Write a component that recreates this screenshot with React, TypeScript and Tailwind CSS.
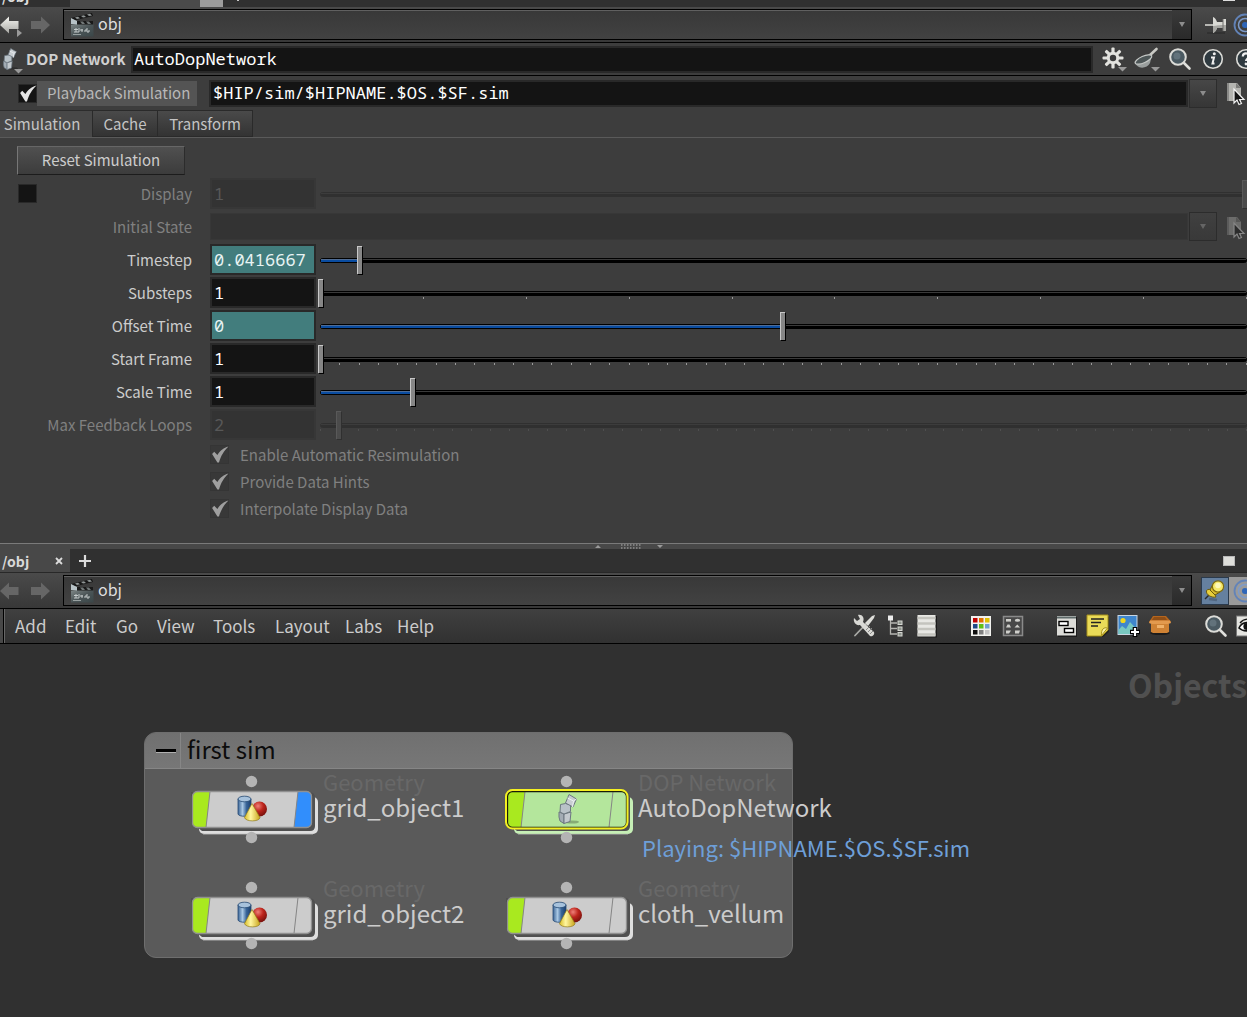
import { useState } from "react";
import type { ReactNode } from "react";

function Clapper() {
  return (
    <svg width="24" height="26" viewBox="0 0 24 26" className="shrink-0" aria-hidden="true">
      <defs>
        <linearGradient id="clap" x1="0" y1="0" x2="1" y2="1">
          <stop offset="0" stopColor="#7d8686" />
          <stop offset="0.5" stopColor="#4a5456" />
          <stop offset="1" stopColor="#3a4648" />
        </linearGradient>
      </defs>
      <path d="M1 6 L22 1 L23 4 L2 9z" fill="#161616" />
      <path d="M5 5.500 l3 -.8 l2 1.600 l-3 .8z M11 4 l3 -.7 l2 1.600 l-3 .7z M17 2.500 l3 -.7 l2 1.600 l-3 .7z" fill="#8f9494" />
      <path d="M1 9 H23 V13 H1z" fill="#191919" />
      <path d="M10 9.500h3l2 2.500h-3z M16 9.500h3l2 2.500h-3z" fill="#727878" />
      <path d="M1 6 L7 9 L7 13 L1 12z" fill="#b7c2c6" />
      <rect x="1" y="12.500" width="22.500" height="12" fill="url(#clap)" />
      <path d="M4 17.500h4M6 16v4M9 16v4M10 18h3M12 20v-3M14 19h2v-2M17 16v4h2v-2M4 20h5" stroke="#c4caca" strokeWidth="1" fill="none" />
      <path d="M3 22.500h8" stroke="#98a0a0" />
    </svg>
  );
}

function NavArrow({ right = false, dim = false }: { right?: boolean; dim?: boolean }) {
  return (
    <svg width="22" height="24" viewBox="0 0 22 24" className="shrink-0" aria-hidden="true">
      <defs>
        <linearGradient id="arrowLit" x1="0" y1="0" x2="0" y2="1">
          <stop offset="0" stopColor="#f4f4f0" />
          <stop offset="1" stopColor="#a8a8a4" />
        </linearGradient>
      </defs>
      {right ? (
        <path d="M20 12 L11 3.500 V8 H1 V16 H11 V20.500z" fill="#666666" />
      ) : (
        <path d="M0 12 L9 3.500 V8 H18.500 V16 H9 V20.500z" fill={dim ? "#666666" : "url(#arrowLit)"} />
      )}
      {!dim && !right && <path d="M17 16 L22 20 L17 24z" fill="#9a9a9a" />}
    </svg>
  );
}

function Cubes({ className = "" }: { className?: string }) {
  return (
    <svg width="22" height="32" viewBox="0 0 22 32" className={className} aria-hidden="true">
      <ellipse cx="15" cy="29" rx="7" ry="1.600" fill="#000" opacity="0.250" />
      <g stroke="#6c7780" strokeWidth="1" strokeLinejoin="round">
        <path d="M2 19 l5 2 v9.500 l-4 -2.500 l-1 -4z" fill="#a3acb4" />
        <path d="M7 21 l7 -2 l-1 9.500 l-6 2z" fill="#c3c9ce" />
        <path d="M3.500 11.500 l5 -1 l5 1.500 v6.500 l-6.500 2.500 l-4 -2z" fill="#b9c2c8" />
        <path d="M12 1.500 l7.500 4.500 l-3.500 8 l-7.500 -4z" fill="#c9ced2" />
        <path d="M10.500 5 l6 3 l3 -2 M16.500 8 l-1 6" fill="none" stroke="#edf0f2" />
      </g>
    </svg>
  );
}

function Shapes() {
  return (
    <g>
      <defs>
        <linearGradient id="cyl" x1="0" y1="0" x2="1" y2="0">
          <stop offset="0" stopColor="#3c6595" />
          <stop offset="0.350" stopColor="#a9c8e4" />
          <stop offset="0.650" stopColor="#386498" />
          <stop offset="1" stopColor="#1c3f6d" />
        </linearGradient>
        <radialGradient id="ball" cx="0.400" cy="0.300" r="0.700">
          <stop offset="0" stopColor="#ee8078" />
          <stop offset="0.500" stopColor="#bd251c" />
          <stop offset="1" stopColor="#7a120d" />
        </radialGradient>
        <linearGradient id="cone" x1="0" y1="0" x2="1" y2="0">
          <stop offset="0" stopColor="#d8bc26" />
          <stop offset="0.400" stopColor="#fff6a0" />
          <stop offset="1" stopColor="#c9a41a" />
        </linearGradient>
      </defs>
      <path d="M0.500 3 V18 C1 21 13 21 13.500 18 V3z" fill="url(#cyl)" stroke="#264a74" strokeWidth="0.800" />
      <ellipse cx="7" cy="3" rx="6.500" ry="2.800" fill="#a7c2dc" stroke="#264a74" strokeWidth="0.800" />
      <circle cx="22" cy="13" r="7.500" fill="url(#ball)" />
      <path d="M14.500 7.500 L7 21.500 C8 26 22 26 22.500 21.500z" fill="url(#cone)" stroke="#8f7a1c" strokeWidth="0.700" />
    </g>
  );
}

function Magnifier() {
  return (
    <svg width="24" height="24" viewBox="0 0 24 24" aria-hidden="true">
      <path d="M15 15 L21.500 21.500" stroke="#e0e0dc" strokeWidth="2.600" strokeLinecap="round" />
      <circle cx="10" cy="10" r="7.800" fill="#4b5a62" stroke="#dcdcd8" strokeWidth="2" />
      <circle cx="9" cy="9" r="3.500" fill="#71828c" opacity="0.600" />
    </svg>
  );
}

function Gear() {
  const teeth = [0, 45, 90, 135, 180, 225, 270, 315];
  return (
    <svg width="26" height="26" viewBox="0 0 26 26" aria-hidden="true">
      <g fill="#e2e2de">
        {teeth.map((a) => (
          <rect key={a} x="10.400" y="1.500" width="3.200" height="6.500" rx="1" transform={`rotate(${a} 12 12)`} />
        ))}
        <circle cx="12" cy="12" r="6.200" />
      </g>
      <circle cx="12" cy="12" r="3.200" fill="#3a3a3a" />
      <path d="M17 21h9l-4.500 4.500z" fill="#999" />
    </svg>
  );
}

function Pan() {
  return (
    <svg width="26" height="26" viewBox="0 0 26 26" aria-hidden="true">
      <path d="M15 10 L22.500 3" stroke="#c9c9c4" strokeWidth="2.600" strokeLinecap="round" />
      <path d="M1 15 C2 24 13 23 16 17 L18 9z" fill="#9a9f9e" />
      <ellipse cx="9.500" cy="13.500" rx="9" ry="3.200" transform="rotate(-24 9.500 13.500)" fill="#4d5657" stroke="#c5c8c6" strokeWidth="1.200" />
      <path d="M17 21h9l-4.500 4.500z" fill="#999" />
    </svg>
  );
}

function RoundBadge({ kind }: { kind: "info" | "help" }) {
  return (
    <svg width="22" height="22" viewBox="0 0 22 22" aria-hidden="true">
      <circle cx="11" cy="11" r="9.300" fill="#2f3a40" stroke="#dcdcd8" strokeWidth="1.600" />
      {kind === "info" ? (
        <g>
          <circle cx="12.300" cy="5.800" r="1.500" fill="#eee" />
          <path d="M9 9.500 H12 L10.500 15.500 H12.500" fill="none" stroke="#eee" strokeWidth="2" />
        </g>
      ) : (
        <g>
          <path d="M7.800 8.500 C8 4.500 14 4.500 14 8 C14 10.500 11 10.500 11 13" fill="none" stroke="#eee" strokeWidth="2.200" />
          <circle cx="11" cy="16" r="1.400" fill="#eee" />
        </g>
      )}
    </svg>
  );
}

function PushPin() {
  return (
    <svg width="24" height="22" viewBox="0 0 24 22" aria-hidden="true">
      <path d="M3 19h18" stroke="#2b2b2b" strokeWidth="2" opacity="0.600" />
      <path d="M1 11 H10" stroke="#d5d5d0" strokeWidth="1.600" />
      <path d="M9 3 C12 4 13 8 13 8 H19 V5 H22 V17 H19 V14 H13 C13 14 12 18 9 19z" fill="#d9d9d4" />
      <path d="M9 12 C12 12 13 11 19 11 V14 H13 C13 14 12 18 9 19z M19 11h3v6h-3z" fill="#a6a6a2" />
      <path d="M19 5V17" stroke="#6f6f6d" />
    </svg>
  );
}

function Rings() {
  return (
    <svg width="24" height="24" viewBox="0 0 24 24" className="shrink-0" aria-hidden="true">
      <circle cx="12" cy="12" r="10.500" fill="none" stroke="#6283b8" strokeWidth="1.800" />
      <circle cx="12" cy="12" r="6.500" fill="none" stroke="#7d9bca" strokeWidth="1.500" />
      <circle cx="12" cy="12" r="3" fill="#2f66b8" />
    </svg>
  );
}

function YellowPin() {
  return (
    <svg width="22" height="24" viewBox="0 0 22 24" aria-hidden="true">
      <path d="M5 20 L13 21" stroke="#4a5c74" strokeWidth="2.500" opacity="0.700" />
      <path d="M1 20 L6 15" stroke="#2a2a2a" strokeWidth="1.500" />
      <path d="M2.500 11.500 C6 8 10 13 12 18 C8 19 1.500 16 2.500 11.500z" fill="#e8cf3c" stroke="#6a5a10" strokeWidth="1" />
      <path d="M6 11 L9 5 L16 13 L11 16z" fill="#d9bd2e" stroke="#6a5a10" strokeWidth="1" />
      <circle cx="14" cy="7.500" r="5.600" fill="#f6e969" stroke="#806c12" strokeWidth="1.200" />
      <circle cx="14" cy="6.500" r="2.800" fill="#fdf8b8" />
    </svg>
  );
}

function FilePick() {
  return (
    <svg width="21" height="26" viewBox="0 0 21 26" className="shrink-0" aria-hidden="true">
      <path d="M2 3 H12 L16 8 V21 H2z" fill="#b4b4b0" />
      <path d="M2 3 H4 V21 H2z" fill="#8a8a88" />
      <path d="M11 3 L16 8 H11z" fill="#7c7c7a" />
      <path d="M9 9 V23 L12 20 L14 24.500 L16.500 23.500 L14.500 19.500 H19z" fill="#151515" stroke="#f2f2f2" strokeWidth="1.200" />
    </svg>
  );
}

function CaretDown() {
  return (
    <svg width="8" height="7" viewBox="0 0 8 7" aria-hidden="true">
      <path d="M1 1h6l-3 5z" fill="#8d8d8d" />
    </svg>
  );
}

const iconTools = (
  <svg width="24" height="24" viewBox="0 0 24 24" aria-hidden="true">
    <path d="M3 21.500 L14 10" stroke="#a9aaa6" strokeWidth="1.800" strokeLinecap="round" />
    <path d="M13 9 L20 2 L23 1 L22 4 L16 12z" fill="#dededa" />
    <path d="M2 4 L5 7 L8 5 L6 1 C10 0 13 4 11 8 L22 18 C23 21 20 23 18 22 L8 11 C4 12 1 8 2 4z" fill="#d9d9d5" />
    <path d="M14 16l4 -4 M16 18l4 -4 M18 20l3 -3" stroke="#8a8a88" />
  </svg>
);
const iconTree = (
  <svg width="18" height="24" viewBox="0 0 18 24" aria-hidden="true">
    <path d="M3.500 4 V20 H10 M3.500 9H10 M3.500 14.500H10" fill="none" stroke="#b5b5b1" strokeWidth="1.300" />
    <rect x="1" y="1.500" width="5" height="5" fill="#ececec" />
    <g fill="#8f948d" stroke="#d5d7d2" strokeWidth="1">
      <rect x="11" y="7" width="4" height="3.500" />
      <rect x="11" y="13" width="4" height="3.500" />
      <rect x="11" y="18.500" width="4" height="3.500" />
    </g>
  </svg>
);
const iconList = (
  <svg width="20" height="24" viewBox="0 0 20 24" aria-hidden="true">
    <rect x="1" y="2" width="19" height="21.500" fill="#1a1a1a" />
    <rect x="0.500" y="1" width="18" height="21.500" fill="#e8e8e4" />
    <path d="M0.500 4h18M0.500 9.500h18M0.500 15h18M0.500 20.500h18" stroke="#c4c4be" strokeWidth="2.400" />
  </svg>
);
const paletteColors = ["#c00000", "#e07000", "#e0c000", "#204a87", "#5fc015", "#729fcf", "#101010", "#808080", "#c4c4c4"];
const iconPalette = (
  <svg width="20" height="22" viewBox="0 0 20 22" aria-hidden="true">
    <rect x="0" y="1" width="20" height="20" fill="#f2f2ee" />
    {paletteColors.map((c, i) => (
      <rect key={c} x={2 + (i % 3) * 6} y={3 + Math.floor(i / 3) * 6} width="4.500" height="4.500" fill={c} />
    ))}
  </svg>
);
const iconShapesGrid = (
  <svg width="22" height="22" viewBox="0 0 22 22" aria-hidden="true">
    <rect x="1.500" y="1.500" width="19" height="19" fill="#484848" stroke="#8a8a8a" strokeWidth="1.500" />
    <g fill="#cfcfcb">
      <rect x="4" y="4" width="5" height="2.600" />
      <ellipse cx="15.500" cy="5.300" rx="2.700" ry="1.500" />
      <path d="M4 12.500h5l-1.500 -3h-2z M12.500 12.500h5.500l-2.700 -3z M4 15.500h5l-2 3h-3z M13 15.500h5l-1 3h-4z" />
    </g>
  </svg>
);
const iconWindows = (
  <svg width="22" height="22" viewBox="0 0 22 22" aria-hidden="true">
    <rect x="2" y="2" width="19" height="20" fill="#1c1c1c" />
    <rect x="1" y="1" width="19" height="19.500" fill="#dcdcd8" />
    <rect x="1" y="1.500" width="19" height="2" fill="#5e6a6a" />
    <rect x="3" y="6.500" width="9" height="4" fill="#fff" stroke="#000" strokeWidth="1.400" />
    <rect x="8.500" y="13.500" width="9" height="4" fill="#fff" stroke="#000" strokeWidth="1.400" />
  </svg>
);
const iconNote = (
  <svg width="24" height="24" viewBox="0 0 24 24" aria-hidden="true">
    <path d="M2 3 H23 V18 L17 23 H2z" fill="#1c1c12" opacity="0.600" />
    <path d="M1 1 H22 V16 L16 22 H1z" fill="#eadb58" stroke="#a8921c" />
    <path d="M21.500 14 C18 13 15 15 15.500 21.500z" fill="#fbf3a4" stroke="#a8921c" strokeWidth="1" />
    <path d="M5 5h13M5 8.500h10M5 12h7" stroke="#222" strokeWidth="1.600" />
  </svg>
);
const iconPicture = (
  <svg width="24" height="24" viewBox="0 0 24 24" aria-hidden="true">
    <rect x="0.500" y="1" width="20" height="20" fill="#c9d6e2" />
    <rect x="1.500" y="2" width="18" height="18" fill="#3f86cc" />
    <circle cx="6" cy="6.500" r="2.600" fill="#f0d81e" />
    <path d="M1.500 16 L5 12 L9 15 L13 8 L19.500 15 V20 H1.500z" fill="#78c8c0" />
    <path d="M18 13v10M13 18h10" stroke="#000" strokeWidth="4.600" />
    <path d="M18 14v8M14 18h8" stroke="#fff" strokeWidth="2.200" />
  </svg>
);
const iconBox = (
  <svg width="24" height="24" viewBox="0 0 24 24" aria-hidden="true">
    <ellipse cx="12" cy="19" rx="10" ry="2" fill="#1c1c1c" />
    <path d="M5 2 H18 L22 6.500 L23 8 L19 10 H4 L1 8 L3 5z" fill="#b5651d" />
    <path d="M6 3h11l2 3H4z" fill="#8e4e16" />
    <path d="M2 6.500H22L23 9l-4 1.500H5L1 9z" fill="#e39a4e" />
    <path d="M3 10 H21 V18 L19 19 H5 L3 18z" fill="#cf8234" />
    <path d="M9 11h7v3H9z" fill="#f0b26a" />
  </svg>
);
const iconEye = (
  <svg width="22" height="22" viewBox="0 0 22 22" className="shrink-0" aria-hidden="true">
    <rect x="0.500" y="1" width="21" height="20" fill="#e4e4e0" stroke="#777" />
    <path d="M3 13 C6 6 15 6 20 12 C15 17 7 17 3 13z" fill="#fff" stroke="#111" strokeWidth="1.600" />
    <path d="M4 8 C8 3 15 3 20 7" fill="none" stroke="#111" strokeWidth="1.400" />
    <circle cx="11" cy="11.500" r="3.600" fill="#111" />
  </svg>
);

function IconButton({ label, className, children }: { label: string; className: string; children: ReactNode }) {
  return (
    <button type="button" aria-label={label} className={`flex h-7 shrink-0 items-center justify-center ${className}`}>
      {children}
    </button>
  );
}

function Tick({ className = "" }: { className?: string }) {
  return (
    <svg viewBox="0 0 18 18" className={`pointer-events-none absolute inset-0 size-full ${className}`} aria-hidden="true">
      <path d="M2 8.500 L4 6.500 L7 9.500 C10 5 13 3 17.500 1.500 C13 6 10.500 10 8.500 16.500 H7z" fill="#e4e4e4" />
    </svg>
  );
}

function Check({ id, checked, disabled = false }: { id: string; checked: boolean; disabled?: boolean }) {
  const [on, setOn] = useState(checked);
  return (
    <span className="relative block size-[19px] shrink-0">
      <input
        id={id}
        type="checkbox"
        aria-label={id}
        checked={on}
        disabled={disabled}
        onChange={(e) => setOn(e.target.checked)}
        className="block size-full appearance-none border border-[#292929] bg-[#141414] disabled:border-[#353535] disabled:bg-[#383838]"
      />
      {on && <Tick className={disabled ? "opacity-60" : ""} />}
    </span>
  );
}

type Param = {
  label: string;
  value: string;
  pos: number;
  ticks?: number;
  keyed?: boolean;
  disabled?: boolean;
  toggle?: boolean;
};

function ParamSlider({ param }: { param: Param }) {
  const [pos, setPos] = useState(param.pos);
  const marks = Array.from({ length: param.ticks ?? 0 }, (_, i) => i);
  return (
    <div className={`relative h-7 min-w-0 flex-1 ${param.disabled ? "opacity-20" : ""}`}>
      <div className="absolute inset-x-0 top-3 ml-0.5 h-[5px] rounded-sm border border-black bg-black">
        <div className="h-px bg-[#3a3a3a]" />
        {!param.disabled && pos > 0 && (
          <div className="absolute top-0 left-0 h-[3px] border-t border-[#4f6c94] bg-[#0a4ca0]" style={{ width: `${pos / 10}%` }} />
        )}
      </div>
      <div className="absolute inset-x-0 top-[18px] ml-0.5 flex justify-between">
        {marks.map((m) => (
          <span key={m} className="h-0.5 w-px bg-[#9a9a9a]" />
        ))}
      </div>
      <input
        type="range"
        min={0}
        max={1000}
        value={pos}
        disabled={param.disabled}
        aria-label={`${param.label} slider`}
        onChange={(e) => setPos(Number(e.target.value))}
        className="absolute inset-0 h-7 w-full appearance-none bg-transparent [&::-webkit-slider-thumb]:h-7 [&::-webkit-slider-thumb]:w-[5px] [&::-webkit-slider-thumb]:appearance-none [&::-webkit-slider-thumb]:border-t [&::-webkit-slider-thumb]:border-l [&::-webkit-slider-thumb]:border-[#c8c8c8] [&::-webkit-slider-thumb]:bg-[#868686] [&::-webkit-slider-thumb]:shadow-[1px_1px_0_#000]"
      />
    </div>
  );
}

function ParamRow({ param }: { param: Param }) {
  const id = param.label.toLowerCase().replace(/ /g, "-");
  return (
    <div className="flex h-[33px] items-center">
      <div className="flex w-[210px] shrink-0 items-center justify-between pr-[18px] pl-[18px]">
        {param.toggle ? <Check id={`${id}-enabled`} checked={false} /> : <span />}
        <label htmlFor={id} className={param.disabled ? "text-[#808080]" : "text-[#cccccc]"}>
          {param.label}
        </label>
      </div>
      <input
        id={id}
        type="text"
        defaultValue={param.value}
        disabled={param.disabled}
        className={`h-[31px] w-[106px] shrink-0 border-2 px-0.5 font-['Noto_Sans_Mono','Liberation_Mono',monospace] text-[17px] ${
          param.disabled
            ? "border-[#373737] bg-[#333333] text-[#585858]"
            : param.keyed
              ? "border-[#292929] bg-[#427d7d] text-[#e8f4f4]"
              : "border-[#292929] bg-[#141414] text-white"
        }`}
      />
      <div className="flex min-w-0 flex-1 pl-0.5">
        <ParamSlider param={param} />
      </div>
    </div>
  );
}

const displayRow: Param = { label: "Display", value: "1", pos: 1000, disabled: true, toggle: true };
const params: Param[] = [
  { label: "Timestep", value: "0.0416667", pos: 42, keyed: true },
  { label: "Substeps", value: "1", pos: 0, ticks: 10 },
  { label: "Offset Time", value: "0", pos: 500, keyed: true },
  { label: "Start Frame", value: "1", pos: 0, ticks: 49 },
  { label: "Scale Time", value: "1", pos: 100 },
  { label: "Max Feedback Loops", value: "2", pos: 20, ticks: 50, disabled: true },
];
const toggles = ["Enable Automatic Resimulation", "Provide Data Hints", "Interpolate Display Data"];

function PathRow({ active, children }: { active: boolean; children: ReactNode }) {
  return (
    <div className="flex h-9 items-center border-b border-black bg-linear-to-b from-[#4a4a4a] to-[#383838]">
      <div className="flex w-[63px] shrink-0 items-center gap-2">
        <button type="button" aria-label="Back"><NavArrow dim={!active} /></button>
        <button type="button" aria-label="Forward"><NavArrow right dim /></button>
      </div>
      <div className="flex h-[31px] min-w-0 flex-1 items-center border border-black bg-linear-to-b from-[#383838] to-[#424242] pl-1.5 shadow-[inset_0_1px_0_#606060]">
        <Clapper />
        <span className="flex-1 pb-[3px] pl-1 text-base leading-5 text-[#dddddd]">obj</span>
        <button type="button" aria-label="Path history" className="flex h-full w-[19px] items-center justify-center bg-linear-to-b from-[#3a3a3a] to-[#2a2a2a]">
          <CaretDown />
        </button>
      </div>
      <div className="flex w-[55px] shrink-0 items-center overflow-hidden">{children}</div>
    </div>
  );
}

function DropButton({ disabled = false }: { disabled?: boolean }) {
  return (
    <button
      type="button"
      aria-label="Choose"
      disabled={disabled}
      className="ml-px flex h-[29px] w-7 shrink-0 items-center justify-center border border-[#2c2c2c] bg-linear-to-b from-[#474747] to-[#363636] disabled:from-[#404040] disabled:to-[#393939] disabled:*:opacity-50"
    >
      <CaretDown />
    </button>
  );
}

function ParameterPane() {
  return (
    <section className="bg-[#3d3d3d] text-[15px] leading-5">
      <div className="flex h-[7px] items-end overflow-hidden bg-[#303030] text-sm leading-[19px] font-bold text-[#dddddd]">
        <span className="h-5 w-[70px] pl-0.5">/obj</span>
        <span className="h-[7px] w-[130px] bg-[#4a4a4a]" />
        <span className="h-[7px] w-[23px] bg-[#9c9c9c]" />
        <span className="ml-3.5 h-[7px] w-0.5"><span className="block h-px bg-[#c8c8c8]" /></span>
        <span className="mr-3 ml-auto h-[7px] w-3"><span className="block h-px bg-[#dddddd]" /></span>
      </div>
      <PathRow active>
        <IconButton label="Pin" className="ml-3 w-6"><PushPin /></IconButton>
        <IconButton label="Link" className="ml-[5px] w-6"><Rings /></IconButton>
      </PathRow>
      <div className="flex h-[33px] items-center border-b border-black">
        <button type="button" aria-label="Node menu" className="flex h-full w-[26px] shrink-0 items-end pl-0.5">
          <Cubes className="mb-1 h-6 w-4" />
          <svg width="10" height="6" viewBox="0 0 10 6" className="-ml-1 shrink-0" aria-hidden="true"><path d="M0 0h9l-4.500 4.500z" fill="#999" /></svg>
        </button>
        <label htmlFor="node-name" className="w-[105px] shrink-0 font-bold whitespace-nowrap text-[#d0d0d0]">DOP Network</label>
        <input
          id="node-name"
          type="text"
          defaultValue="AutoDopNetwork"
          className="h-[27px] min-w-0 flex-1 border-2 border-[#292929] bg-[#141414] px-px pb-0.5 font-['Noto_Sans_Mono','Liberation_Mono',monospace] text-[17px] text-white"
        />
        <div className="flex w-[154px] shrink-0 items-center overflow-hidden pl-1">
          <IconButton label="Settings" className="w-[33px]"><Gear /></IconButton>
          <IconButton label="Take" className="w-[33px]"><Pan /></IconButton>
          <IconButton label="Find" className="w-[33px]"><Magnifier /></IconButton>
          <IconButton label="Info" className="w-[33px]"><RoundBadge kind="info" /></IconButton>
          <IconButton label="Help" className="w-[33px]"><RoundBadge kind="help" /></IconButton>
        </div>
      </div>
      <div className="flex h-[34px] items-center">
        <div className="flex w-[209px] shrink-0 items-center pl-[18px]">
          <Check id="playback-enabled" checked />
          <label htmlFor="playback" className="h-[25px] w-40 bg-[#545454] pl-2.5 leading-6 whitespace-nowrap text-[#b8b8b8]">Playback Simulation</label>
        </div>
        <input
          id="playback"
          type="text"
          defaultValue="$HIP/sim/$HIPNAME.$OS.$SF.sim"
          className="h-[27px] min-w-0 flex-1 border-2 border-[#292929] bg-[#141414] px-0.5 pb-0.5 font-['Noto_Sans_Mono','Liberation_Mono',monospace] text-[17px] text-white"
        />
        <DropButton />
        <button type="button" aria-label="Pick file" className="ml-2 w-[22px] shrink-0 overflow-hidden"><FilePick /></button>
      </div>
      <div role="tablist" className="flex h-7 items-stretch border-b border-[#5a5a5a] text-[#c4c4c4]">
        <button type="button" role="tab" aria-selected="true" className="w-[92px] border-t border-[#2c2c2c] bg-[#484848] pr-2">Simulation</button>
        <button type="button" role="tab" className="w-[66px] border border-[#2a2a2a] bg-linear-to-b from-[#4a4a4a] to-[#333333]">Cache</button>
        <button type="button" role="tab" className="w-[95px] border border-l-0 border-[#2a2a2a] bg-linear-to-b from-[#4a4a4a] to-[#333333]">Transform</button>
      </div>
      <div className="pt-2 pb-[21px]">
        <button
          type="button"
          className="mb-0.5 ml-[17px] block h-[29px] w-[168px] border border-t-[#666] border-r-[#2c2c2c] border-b-[#1c1c1c] border-l-[#777] bg-linear-to-b from-[#505050] to-[#3c3c3c] pb-0.5 text-[#cccccc]"
        >
          Reset Simulation
        </button>
        <ParamRow param={displayRow} />
        <div className="flex h-[33px] items-center">
          <label htmlFor="initial-state" className="w-[210px] shrink-0 pr-[18px] text-right text-[#808080]">Initial State</label>
          <input id="initial-state" type="text" disabled className="h-[27px] min-w-0 flex-1 border border-[#373737] bg-[#333333]" />
          <DropButton disabled />
          <button type="button" aria-label="Pick initial state" disabled className="ml-2 w-[22px] shrink-0 overflow-hidden opacity-40"><FilePick /></button>
        </div>
        {params.map((p) => (
          <ParamRow key={p.label} param={p} />
        ))}
        {toggles.map((t) => (
          <div key={t} className="flex h-[27px] items-center gap-[11px] pl-[210px]">
            <Check id={t} checked disabled />
            <label htmlFor={t} className="text-[#808080]">{t}</label>
          </div>
        ))}
      </div>
    </section>
  );
}

function Splitter() {
  return (
    <div className="flex h-1.5 shrink-0 items-center justify-center border-t border-[#7a7a7a] bg-[#484848] pl-2">
      <svg width="82" height="5" viewBox="0 0 82 5" aria-hidden="true" className="shrink-0">
        <path d="M8 4h6l-3 -3z M70 1h6l-3 3z" fill="#9a9a9a" />
        <path d="M34 1h20M34 4h20" stroke="#8e8e8e" strokeWidth="1.500" strokeDasharray="1.500 1.500" />
      </svg>
    </div>
  );
}

type NodeData = {
  name: string;
  type: string;
  place: string;
  flagged?: boolean;
  selected?: boolean;
  status?: string;
};

const nodes: NodeData[] = [
  { name: "grid_object1", type: "Geometry", place: "left-[186px] top-[128px]", flagged: true },
  { name: "AutoDopNetwork", type: "DOP Network", place: "left-[501px] top-[128px]", selected: true, status: "Playing: $HIPNAME.$OS.$SF.sim" },
  { name: "grid_object2", type: "Geometry", place: "left-[186px] top-[234px]" },
  { name: "cloth_vellum", type: "Geometry", place: "left-[501px] top-[234px]" },
];

function NetworkNode({ node }: { node: NodeData }) {
  const face = node.selected ? "#b4e69c" : "#cccccc";
  const plate = node.selected ? "#c6efb6" : "#dedede";
  return (
    <div className={`absolute flex ${node.place}`}>
      <svg width="137" height="74" viewBox="0 0 137 74" className="shrink-0" aria-hidden="true">
        <rect x="13" y="25" width="119" height="37" rx="5" fill={plate} />
        <path d="M17 62.300H127" stroke="#9a9a9a" strokeWidth="0.800" />
        <path d="M5 20 H123 Q129 20 129 26 V54 Q129 59 124 59 H16 L5 50z" fill="#505050" />
        <rect x="6.500" y="19.500" width="119" height="36" rx="5" fill={face} />
        <path d="M11.500 19.500 H24 L20 55.500 H11.500 Q6.500 55.500 6.500 50.500 V24.500 Q6.500 19.500 11.500 19.500z" fill="#a9e91f" />
        {node.flagged && (
          <path d="M112 19.500 H120.500 Q125.500 19.500 125.500 24.500 V50.500 Q125.500 55.500 120.500 55.500 H108z" fill="#318efc" />
        )}
        <path d="M24 19.500 L20 55.500 M112 19.500 L108 55.500" stroke="#858585" strokeWidth="1" />
        <rect x="6.500" y="19.500" width="119" height="36" rx="5" fill="none" stroke={node.selected ? "#181c08" : "#909090"} strokeWidth="1.300" />
        {node.selected && <rect x="5" y="18" width="121.500" height="38.500" rx="6.500" fill="none" stroke="#f4f022" strokeWidth="2" />}
        <circle cx="65.500" cy="9.500" r="5.700" fill="#b4b4b4" />
        <circle cx="65.500" cy="65.500" r="5.700" fill="#b4b4b4" />
        {node.selected ? (
          <g transform="translate(56 21)">
            <Cubes />
          </g>
        ) : (
          <g transform="translate(51.500 24)">
            <Shapes />
          </g>
        )}
      </svg>
      <div className="whitespace-nowrap">
        <div className="text-[22px] leading-[18px] text-[#686868]">{node.type}</div>
        <div className="text-[24px] leading-[34px] text-[#cccccc]">{node.name}</div>
        {node.status && <div className="pt-2 pl-1 text-[22px] leading-[30px] text-[#6e9fd8]">{node.status}</div>}
      </div>
    </div>
  );
}

const menus = [
  { label: "Add", width: "w-[50px]" },
  { label: "Edit", width: "w-[51px]" },
  { label: "Go", width: "w-[41px]" },
  { label: "View", width: "w-[56px]" },
  { label: "Tools", width: "w-[62px]" },
  { label: "Layout", width: "w-[70px]" },
  { label: "Labs", width: "w-[52px]" },
  { label: "Help", width: "w-[50px]" },
];

function NetworkPane() {
  return (
    <section className="flex min-h-0 flex-1 flex-col bg-[#303030]">
      <div className="flex h-6 shrink-0 items-center border-b border-[#282828]">
        <div className="flex h-full w-[70px] items-center justify-between bg-[#484848] pr-[7px] pl-0.5 text-sm leading-5 font-bold text-[#d8d8d8]">
          <span>/obj</span>
          <button type="button" aria-label="Close tab">
            <svg width="8" height="8" viewBox="0 0 8 8" aria-hidden="true"><path d="M1 1l6 6M7 1l-6 6" stroke="#dcdcdc" strokeWidth="1.800" /></svg>
          </button>
        </div>
        <button type="button" aria-label="New tab" className="ml-[9px]">
          <svg width="12" height="12" viewBox="0 0 12 12" aria-hidden="true"><path d="M6 0v12M0 6h12" stroke="#dcdcdc" strokeWidth="2.200" /></svg>
        </button>
        <button type="button" aria-label="Maximize pane" className="mr-3 ml-auto h-2.5 w-3 border border-[#b8b8b8] bg-[#dededa]" />
      </div>
      <div className="shrink-0">
        <PathRow active={false}>
          <IconButton label="Pin" className="ml-[9px] w-7 border border-[#2b3a4c] bg-[#65809f]"><YellowPin /></IconButton>
          <IconButton label="Link" className="w-9 justify-start bg-[#9a9a9a] pl-1"><Rings /></IconButton>
        </PathRow>
      </div>
      <div className="flex h-[35px] shrink-0 items-center overflow-hidden border-b border-black bg-linear-to-b from-[#404040] to-[#313131]">
        <div className="h-full w-1 border-r border-black bg-[#484848]" />
        <nav className="flex h-full items-center border-l border-[#666666] pl-2.5 text-[17px] leading-6 text-[#cccccc]">
          {menus.map((m) => (
            <button key={m.label} type="button" className={`text-left ${m.width}`}>{m.label}</button>
          ))}
        </nav>
        <div className="ml-auto flex w-[398px] shrink-0 items-center overflow-hidden">
          <IconButton label="Tools" className="w-[30px]">{iconTools}</IconButton>
          <IconButton label="Tree view" className="w-[33px]">{iconTree}</IconButton>
          <IconButton label="List view" className="w-[30px]">{iconList}</IconButton>
          <IconButton label="Color palette" className="ml-6 w-[30px]">{iconPalette}</IconButton>
          <IconButton label="Shape palette" className="w-[34px]">{iconShapesGrid}</IconButton>
          <IconButton label="Network box" className="ml-[21px] w-[31px]">{iconWindows}</IconButton>
          <IconButton label="Sticky note" className="w-[31px]">{iconNote}</IconButton>
          <IconButton label="Background image" className="w-[31px]">{iconPicture}</IconButton>
          <IconButton label="Asset" className="w-[32px]">{iconBox}</IconButton>
          <IconButton label="Find" className="ml-6 w-[31px]"><Magnifier /></IconButton>
          <IconButton label="Visibility" className="w-[32px]">{iconEye}</IconButton>
        </div>
      </div>
      <div className="relative min-h-[373px] flex-1 overflow-hidden">
        <div className="pt-5 text-right text-[32px] leading-10 font-bold text-[#505050]">Objects</div>
        <div className="absolute top-[88px] left-36 h-[226px] w-[649px] overflow-hidden rounded-xl border border-[#6e6e6e] bg-[#5a5a5a]">
          <div className="flex h-9 items-center border-b border-[#868686] bg-linear-to-b from-[#707070] to-[#777777]">
            <button type="button" aria-label="Collapse box" className="flex h-full w-9 items-center justify-end border-r border-[#868686] pr-1">
              <span className="h-1 w-5 border-b border-[#b0b0b0] bg-black" />
            </button>
            <span className="pb-1 pl-1.5 text-[24px] leading-8 text-[#0c0c0c]">first sim</span>
          </div>
        </div>
        {nodes.map((n) => (
          <NetworkNode key={n.name} node={n} />
        ))}
      </div>
    </section>
  );
}

export default function App() {
  return (
    <main className="flex min-h-screen flex-col overflow-hidden bg-[#303030] font-['Noto_Sans_CJK_SC',sans-serif]">
      <ParameterPane />
      <Splitter />
      <NetworkPane />
    </main>
  );
}
